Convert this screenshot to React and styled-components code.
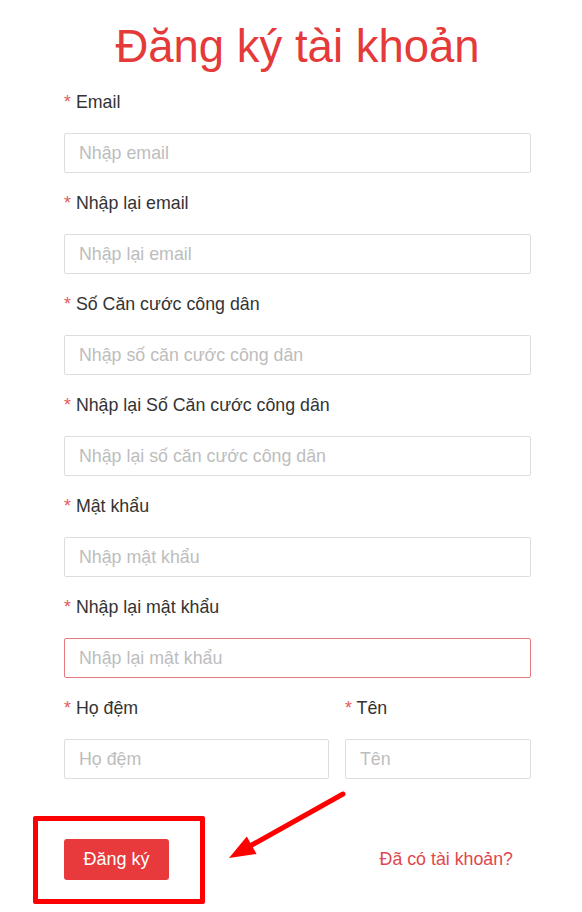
import React from 'react';
import styled, { createGlobalStyle } from 'styled-components';

const GlobalStyle = createGlobalStyle`
	body {
		margin: 0;
		background: #fff;
		font-family: 'Liberation Sans', Arial, sans-serif;
	}
	* {
		box-sizing: border-box;
	}
`;

const Page = styled.div`
	width: 582px;
	min-height: 912px;
	padding: 18px 51px 0 64px;
`;

const Title = styled.h1`
	margin: 0 0 14px;
	font-size: 45.5px;
	line-height: 58px;
	font-weight: normal;
	color: #e53a3a;
	text-align: center;
`;

const Field = styled.div`
	margin-bottom: 18px;
`;

const Label = styled.label`
	display: block;
	font-size: 17.8px;
	line-height: 24px;
	color: #333;
	margin-bottom: 19px;
`;

const Star = styled.span`
	color: #e45c5c;
`;

const Input = styled.input`
	display: block;
	width: 100%;
	height: 40px;
	padding: 0 14px;
	border: 1px solid ${(p) => (p.$error ? '#e47a80' : '#ddd')};
	border-radius: 2px;
	font-family: inherit;
	font-size: 17.8px;
	color: #333;
	outline: none;

	&::placeholder {
		color: #bdbdbd;
	}
`;

const Row = styled.div`
	display: grid;
	grid-template-columns: 1fr 186px;
	gap: 16px;
`;

const Actions = styled.div`
	position: relative;
	display: flex;
	align-items: center;
	margin-top: 42px;
	height: 41px;
`;

const Button = styled.button`
	width: 105px;
	height: 41px;
	border: none;
	border-radius: 3px;
	background: #e8393c;
	color: #fff;
	font-family: inherit;
	font-size: 18px;
	cursor: pointer;
`;

const LoginLink = styled.a`
	margin-left: auto;
	margin-right: 18px;
	font-size: 17.8px;
	color: #e0474e;
	text-decoration: none;
`;

const Highlight = styled.div`
	position: absolute;
	left: -31px;
	top: -23px;
	width: 172px;
	height: 88px;
	border: 5px solid #f00;
	border-radius: 2px;
	pointer-events: none;
`;

const Arrow = styled.svg`
	position: absolute;
	left: 146px;
	top: -58px;
	pointer-events: none;
`;

const fields = [
	{ label: 'Email', placeholder: 'Nhập email' },
	{ label: 'Nhập lại email', placeholder: 'Nhập lại email' },
	{ label: 'Số Căn cước công dân', placeholder: 'Nhập số căn cước công dân' },
	{ label: 'Nhập lại Số Căn cước công dân', placeholder: 'Nhập lại số căn cước công dân' },
	{ label: 'Mật khẩu', placeholder: 'Nhập mật khẩu', type: 'password' },
	{ label: 'Nhập lại mật khẩu', placeholder: 'Nhập lại mật khẩu', type: 'password', error: true },
];

const FormField = ({ label, placeholder, type, error }) => (
	<Field>
		<Label>
			<Star>* </Star>
			{label}
		</Label>
		<Input type={type || 'text'} placeholder={placeholder} $error={error} />
	</Field>
);

const App = () => {
	return (
		<>
			<GlobalStyle />
			<Page>
				<Title>Đăng ký tài khoản</Title>
				{fields.map((f) => (
					<FormField key={f.label} {...f} />
				))}
				<Row>
					<FormField label='Họ đệm' placeholder='Họ đệm' />
					<FormField label='Tên' placeholder='Tên' />
				</Row>
				<Actions>
					<Button>Đăng ký</Button>
					<LoginLink href='#'>Đã có tài khoản?</LoginLink>
					<Highlight />
					<Arrow width='150' height='90' viewBox='0 0 150 90'>
						<line
							x1='133'
							y1='13'
							x2='40'
							y2='65'
							stroke='#f00'
							strokeWidth='5'
							strokeLinecap='round'
						/>
						<polygon points='19,77 36.8,55.6 46.6,73' fill='#f00' />
					</Arrow>
				</Actions>
			</Page>
		</>
	);
};

export default App;
